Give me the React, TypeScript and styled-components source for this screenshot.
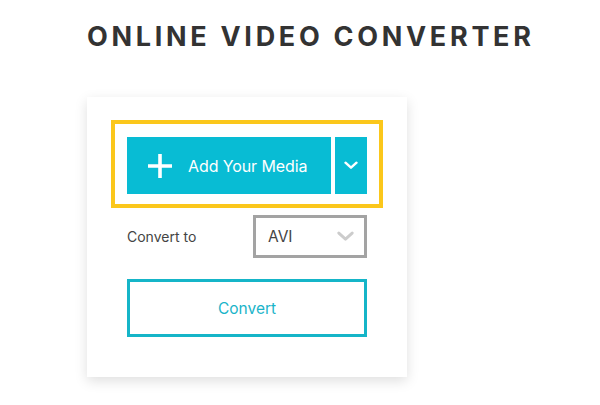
import React from "react";
import styled, { createGlobalStyle } from "styled-components";

const GlobalStyle = createGlobalStyle`
  html, body {
    margin: 0;
    padding: 0;
    background: #ffffff;
    font-family: "Inter", "Liberation Sans", sans-serif;
  }
`;

const TEAL = "#08bcd4";

const Page = styled.div`
  width: 600px;
  height: 405px;
  overflow: hidden;
  padding: 21px 0 0 87px;
  box-sizing: border-box;
`;

const Title = styled.h1`
  margin: 0;
  width: 446px;
  font-size: 27px;
  font-weight: 700;
  letter-spacing: 3.7px;
  color: #333333;
  white-space: nowrap;
  line-height: 32px;
`;

const Card = styled.div`
  margin-top: 44px;
  width: 320px;
  background: #ffffff;
  box-shadow: 0 4px 12px rgba(0, 0, 0, 0.13);
  padding: 23px 0 40px 24px;
  box-sizing: border-box;
`;

const Highlight = styled.div`
  width: 272px;
  height: 88px;
  box-sizing: border-box;
  border: 4px solid #fbc71b;
  padding: 13px 12px 0 12px;
  display: flex;
  gap: 4px;
`;

const AddButton = styled.button`
  width: 204px;
  height: 57px;
  border: none;
  background: ${TEAL};
  color: #ffffff;
  display: flex;
  align-items: center;
  padding: 0 0 0 21px;
  gap: 16px;
  font-family: inherit;
  font-size: 16px;
  letter-spacing: -0.1px;
  cursor: pointer;
`;

const MenuButton = styled.button`
  width: 32px;
  height: 57px;
  border: none;
  background: ${TEAL};
  display: flex;
  align-items: center;
  justify-content: center;
  padding: 0;
  cursor: pointer;
`;

const Row = styled.div`
  display: flex;
  align-items: center;
  margin: 7px 0 0 16px;
  width: 240px;
  justify-content: space-between;
`;

const Label = styled.span`
  font-size: 14px;
  color: #444444;
`;

const Select = styled.div`
  width: 114px;
  height: 43px;
  box-sizing: border-box;
  border: 3px solid #a3a3a3;
  display: flex;
  align-items: center;
  justify-content: space-between;
  padding: 0 10px 0 12px;
  font-size: 15.5px;
  color: #444444;
`;

const ConvertButton = styled.button`
  margin: 21px 0 0 16px;
  width: 240px;
  height: 58px;
  box-sizing: border-box;
  border: 3px solid #15b5c8;
  background: #ffffff;
  color: #1ab4c9;
  font-family: inherit;
  font-size: 15.5px;
  cursor: pointer;
`;

const Plus = () => (
  <svg width="24" height="24" viewBox="0 0 24 24">
    <path d="M12 0v24M0 12h24" stroke="#fff" strokeWidth="3.6" />
  </svg>
);

const Chevron = ({ color, size }: { color: string; size: number }) => (
  <svg width={size} height={size * 0.6} viewBox="0 0 14 8" fill="none">
    <path d="M1.5 1.5L7 6.5l5.5-5" stroke={color} strokeWidth="2.4" strokeLinecap="round" strokeLinejoin="round" />
  </svg>
);

export default function App() {
  return (
    <Page>
      <GlobalStyle />
      <Title>ONLINE VIDEO CONVERTER</Title>
      <Card>
        <Highlight>
          <AddButton>
            <Plus />
            Add Your Media
          </AddButton>
          <MenuButton aria-label="More sources">
            <Chevron color="#ffffff" size={14} />
          </MenuButton>
        </Highlight>
        <Row>
          <Label>Convert to</Label>
          <Select>
            AVI
            <Chevron color="#cccccc" size={17} />
          </Select>
        </Row>
        <ConvertButton>Convert</ConvertButton>
      </Card>
    </Page>
  );
}
